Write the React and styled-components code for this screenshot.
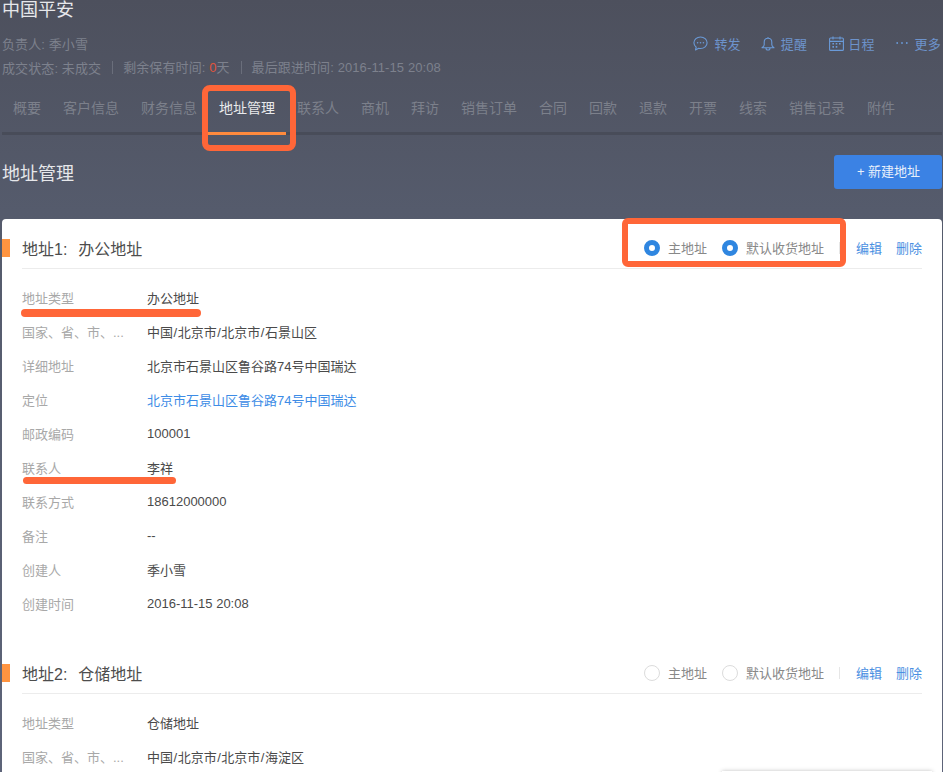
import React from 'react';
import styled, { createGlobalStyle } from 'styled-components';

const Global = createGlobalStyle`
  html, body {
    margin: 0;
    padding: 0;
    height: 100%;
    overflow: hidden;
  }
  body {
    font-family: "Liberation Sans", "Noto Sans CJK SC", sans-serif;
    font-size: 13px;
  }
`;

const tabs = ['概要', '客户信息', '财务信息', '地址管理', '联系人', '商机', '拜访', '销售订单', '合同', '回款', '退款', '开票', '线索', '销售记录', '附件'];

const first = [
  { k: '地址类型', v: '办公地址', line: { left: -1, top: 28, width: 180, height: 8 } },
  { k: '国家、省、市、...', v: '中国/北京市/北京市/石景山区' },
  { k: '详细地址', v: '北京市石景山区鲁谷路74号中国瑞达' },
  { k: '定位', v: '北京市石景山区鲁谷路74号中国瑞达', link: true },
  { k: '邮政编码', v: '100001' },
  { k: '联系人', v: '李祥', line: { left: 1, top: 26, width: 153, height: 7 } },
  { k: '联系方式', v: '18612000000' },
  { k: '备注', v: '--' },
  { k: '创建人', v: '季小雪' },
  { k: '创建时间', v: '2016-11-15 20:08' },
];

const second = [
  { k: '地址类型', v: '仓储地址' },
  { k: '国家、省、市、...', v: '中国/北京市/北京市/海淀区' },
];

// the slashes run a little wider in the reference
const pathText = (v) =>
  v.split('/').map((part, i) => (
    <React.Fragment key={i}>
      {i > 0 && <Slash>/</Slash>}
      {part}
    </React.Fragment>
  ));

const ChatIcon = () => (
  <svg width="15" height="15" viewBox="0 0 15 15" fill="none" stroke="currentColor" strokeWidth="1.1">
    <path d="M7.5 1C3.9 1 .9 3.5.9 6.8c0 1.8.9 3.3 2.3 4.4l-.7 2.8 3.2-1.7c.6.1 1.2.2 1.8.2 3.6 0 6.6-2.5 6.6-5.7S11.1 1 7.5 1z" strokeLinejoin="round" />
    <circle cx="4.6" cy="6.8" r=".8" fill="currentColor" stroke="none" />
    <circle cx="7.5" cy="6.8" r=".8" fill="currentColor" stroke="none" />
    <circle cx="10.4" cy="6.8" r=".8" fill="currentColor" stroke="none" />
  </svg>
);

const BellIcon = () => (
  <svg width="14" height="15" viewBox="0 0 14 15" fill="none" stroke="currentColor" strokeWidth="1.1" strokeLinejoin="round">
    <path d="M7 1v1.2M7 2.2c-2.3 0-3.8 1.8-3.8 4v2.6c0 1.2-.8 2.1-2.2 3h12c-1.4-.9-2.2-1.8-2.2-3V6.2c0-2.2-1.5-4-3.8-4z" />
    <path d="M5 11.9c0 1.3.9 2.1 2 2.1s2-.8 2-2.1" />
  </svg>
);

const CalendarIcon = () => (
  <svg width="15" height="15" viewBox="0 0 15 15" fill="none" stroke="currentColor" strokeWidth="1.1">
    <rect x=".6" y="2" width="13.8" height="12.4" rx="1" />
    <path d="M.6 5.4h13.8M4 .4v3M11 .4v3" />
    <path d="M3.4 7.7h1.6M6.7 7.7h1.6M10 7.7h1.6M3.4 10.9h1.6M6.7 10.9h1.6" strokeWidth="1.6" />
  </svg>
);

const DotsIcon = () => (
  <svg width="12" height="4" viewBox="0 0 12 4" fill="currentColor">
    <circle cx="1.2" cy="2" r=".9" />
    <circle cx="6" cy="2" r=".9" />
    <circle cx="10.8" cy="2" r=".9" />
  </svg>
);

const App = () => {
  return (
    <Page>
      <Global />
      <Title>中国平安</Title>
      <MetaTop>
        <Meta>负责人: 季小雪</Meta>
        <Actions>
          <Action $gap={6}><ChatIcon />转发</Action>
          <Action $gap={6} $lead={1}><BellIcon />提醒</Action>
          <Action $gap={4} $lead={3}><CalendarIcon />日程</Action>
          <Action $gap={7} $lead={2}><DotsIcon />更多</Action>
        </Actions>
      </MetaTop>
      <MetaRow>
        <Meta>成交状态: 未成交</Meta>
        <Meta>剩余保有时间: <Red>0</Red>天</Meta>
        <Meta>最后跟进时间: 2016-11-15 20:08</Meta>
      </MetaRow>
      <TabBar>
        {tabs.map((t, i) => (
          <Tab key={t} $active={i === 3}>
            {t}
            {i === 3 && <TabMark />}
          </Tab>
        ))}
      </TabBar>
      <PageHead>
        <PageTitle>地址管理</PageTitle>
        <AddButton>+ 新建地址</AddButton>
      </PageHead>
      <Card>
        <Section>
          <SectionHead>
            <Marker />
            <SectionTitle>地址1:<SectionName>办公地址</SectionName></SectionTitle>
            <RadioGroup>
              <RadioItem><Radio $on />主地址</RadioItem>
              <RadioItem><Radio $on />默认收货地址</RadioItem>
              <RadioMark />
            </RadioGroup>
            <Divider />
            <LinkText>编辑</LinkText>
            <LinkText>删除</LinkText>
          </SectionHead>
          <Rows>
            {first.map((r) => (
              <Row key={r.k}>
                <Label>{r.k}</Label>
                <Value $link={r.link}>{pathText(r.v)}</Value>
                {r.line && <Underline $left={r.line.left} $top={r.line.top} $width={r.line.width} $height={r.line.height} />}
              </Row>
            ))}
          </Rows>
        </Section>
        <Section>
          <SectionHead>
            <Marker />
            <SectionTitle>地址2:<SectionName>仓储地址</SectionName></SectionTitle>
            <RadioGroup>
              <RadioItem><Radio />主地址</RadioItem>
              <RadioItem><Radio />默认收货地址</RadioItem>
            </RadioGroup>
            <Divider />
            <LinkText>编辑</LinkText>
            <LinkText>删除</LinkText>
          </SectionHead>
          <Rows>
            {second.map((r) => (
              <Row key={r.k}>
                <Label>{r.k}</Label>
                <Value>{pathText(r.v)}</Value>
              </Row>
            ))}
          </Rows>
        </Section>
      </Card>
      <Floating />
    </Page>
  );
};

export default App;

const Page = styled.div`
  position: relative;
  width: 943px;
  height: 772px;
  overflow: hidden;
  box-sizing: border-box;
  padding: 0 1px 0 2px;
  background: linear-gradient(180deg, #4d505d 0px, #555b6c 210px, #5d6479 772px);
`;

const Title = styled.div`
  height: 18px;
  padding-top: 1px;
  box-sizing: border-box;
  line-height: 18px;
  font-size: 18px;
  color: #e6e7ea;
`;

const MetaTop = styled.div`
  display: flex;
  justify-content: space-between;
  align-items: center;
  height: 20px;
  margin-top: 15px;
`;

const MetaRow = styled.div`
  display: flex;
  align-items: center;
  height: 20px;
  margin-top: 4px;
`;

const Meta = styled.span`
  color: #7d818d;
  font-size: 13px;
  letter-spacing: 0.1px;
  white-space: nowrap;
  & + & {
    margin-left: 11px;
    padding-left: 10px;
    border-left: 1px solid #6a6e7b;
    line-height: 13px;
  }
`;

const Red = styled.span`
  color: #e0543c;
`;

const Actions = styled.div`
  display: flex;
  align-items: center;
  gap: 19px;
  margin-right: 1px;
`;

const Action = styled.span`
  display: flex;
  align-items: center;
  gap: ${(p) => p.$gap}px;
  margin-left: ${(p) => p.$lead || 0}px;
  color: #6d93cb;
  font-size: 13px;
  letter-spacing: 0.2px;
  svg {
    flex: none;
    color: #6a9ad8;
  }
`;

const TabBar = styled.div`
  display: flex;
  height: 48px;
  margin-top: 7px;
  border-bottom: 3px solid #484c59;
`;

const Tab = styled.div`
  position: relative;
  height: 51px;
  box-sizing: border-box;
  padding: 14px 11px 0;
  line-height: 20px;
  font-size: 14px;
  white-space: nowrap;
  color: ${(p) => (p.$active ? '#e9eaec' : '#7c808b')};
  border-bottom: 3px solid ${(p) => (p.$active ? '#ff8a3d' : 'transparent')};
`;

const TabMark = styled.div`
  position: absolute;
  left: -6px;
  top: 1px;
  width: 94px;
  height: 66px;
  box-sizing: border-box;
  border: 6px solid #ff6638;
  border-radius: 8px;
`;

const PageHead = styled.div`
  display: flex;
  justify-content: space-between;
  align-items: center;
  height: 34px;
  margin-top: 20px;
`;

const PageTitle = styled.div`
  font-size: 18px;
  color: #e6e7ea;
`;

const AddButton = styled.div`
  width: 108px;
  height: 34px;
  box-sizing: border-box;
  padding-left: 1px;
  line-height: 34px;
  border-radius: 3px;
  background: #3b82e4;
  color: #e8f0fb;
  font-size: 13px;
  text-align: center;
`;

const Card = styled.div`
  margin-top: 30px;
  padding: 9px 20px 0;
  background: #fff;
  border-radius: 4px 4px 0 0;
  height: 600px;
  box-sizing: border-box;
`;

const Section = styled.section`
  & + & {
    margin-top: 32px;
  }
`;

const SectionHead = styled.div`
  position: relative;
  display: flex;
  align-items: center;
  height: 40px;
  border-bottom: 1px solid #ececec;
  & > * {
    margin-bottom: 1px;
  }
`;

const Marker = styled.div`
  position: absolute;
  left: -20px;
  top: 11px;
  width: 8px;
  height: 18px;
  background: #ff9440;
`;

const SectionTitle = styled.div`
  flex: 1;
  font-size: 16px;
  color: #4d4d4d;
`;

const SectionName = styled.span`
  margin-left: 11px;
`;

const RadioGroup = styled.div`
  position: relative;
  display: flex;
  align-items: center;
  gap: 15px;
`;

const RadioItem = styled.div`
  display: flex;
  align-items: center;
  gap: 8px;
  color: #888;
  font-size: 13px;
`;

const Radio = styled.span`
  width: 16px;
  height: 16px;
  box-sizing: border-box;
  border-radius: 50%;
  border: ${(p) => (p.$on ? '5px solid #2f86e0' : '1px solid #dcdcdc')};
  background: #fff;
`;

const RadioMark = styled.div`
  position: absolute;
  left: -22px;
  top: -20px;
  width: 224px;
  height: 49px;
  box-sizing: border-box;
  border: 6px solid #ff6638;
  border-radius: 6px;
`;

const Divider = styled.span`
  width: 1px;
  height: 12px;
  margin: 0 16px 0 15px;
  background: #e6e6e6;
`;

const LinkText = styled.span`
  color: #4a90e2;
  font-size: 13px;
  & + & {
    margin-left: 14px;
  }
`;

const Rows = styled.div`
  margin-top: 12px;
`;

const Row = styled.div`
  position: relative;
  display: flex;
  align-items: center;
  height: 34px;
  box-sizing: border-box;
  padding-bottom: 2px;
`;

const Label = styled.div`
  width: 125px;
  color: #a8a8a8;
  font-size: 13px;
  white-space: nowrap;
`;

const Value = styled.div`
  color: ${(p) => (p.$link ? '#3d8ce6' : '#4a4a4a')};
  font-size: 13px;
`;

const Slash = styled.span`
  margin: 0 0.5px;
`;

const Underline = styled.div`
  position: absolute;
  left: ${(p) => p.$left}px;
  top: ${(p) => p.$top}px;
  width: ${(p) => p.$width}px;
  height: ${(p) => p.$height}px;
  border-radius: 4px;
  background: #ff6638;
`;

const Floating = styled.div`
  position: absolute;
  left: 722px;
  top: 771px;
  width: 210px;
  height: 20px;
  background: #fff;
  box-shadow: 0 0 4px rgba(0, 0, 0, 0.25);
`;
